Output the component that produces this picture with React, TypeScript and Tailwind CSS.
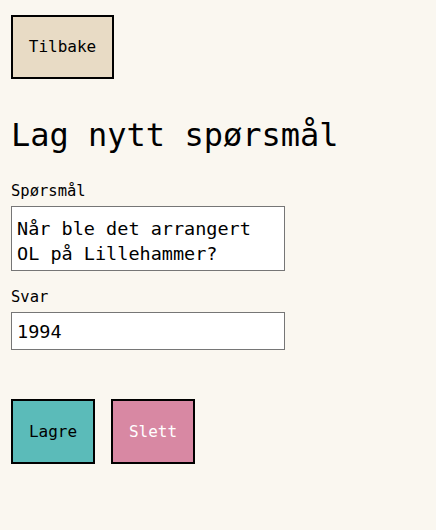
export default function App() {
  return (
    <div
      className="min-h-[530px] bg-[#faf7f0] pl-[11px] pt-[15px] text-black"
      style={{ fontFamily: '"DejaVu Sans Mono", monospace' }}
    >
      <button className="flex h-[64px] w-[103px] items-center justify-center border-2 border-black bg-[#e8dbc5] text-[16px]">
        Tilbake
      </button>

      <h1 className="mt-[37px] text-[32px] leading-[38px]">Lag nytt spørsmål</h1>

      <div className="mt-[27px] flex flex-col">
        <label className="text-[15.5px] leading-[20px]">Spørsmål</label>
        <textarea
          className="mt-[5px] h-[65px] w-[274px] resize-none border border-[#767676] bg-white px-[5px] pt-[9px] pb-[2px] text-[18.5px] leading-[25px] outline-none"
          defaultValue="Når ble det arrangert OL på Lillehammer?"
        />
        <label className="mt-[16px] text-[15.5px] leading-[20px]">Svar</label>
        <input
          className="mt-[5px] h-[38px] w-[274px] border border-[#767676] bg-white px-[5px] text-[18.5px] outline-none"
          defaultValue="1994"
        />
      </div>

      <div className="mt-[49px] flex gap-[16px]">
        <button className="flex h-[65px] w-[84px] items-center justify-center border-2 border-black bg-[#5bbbb9] text-[16px]">
          Lagre
        </button>
        <button className="flex h-[65px] w-[84px] items-center justify-center border-2 border-black bg-[#d888a3] text-[16px] text-white">
          Slett
        </button>
      </div>
    </div>
  );
}
